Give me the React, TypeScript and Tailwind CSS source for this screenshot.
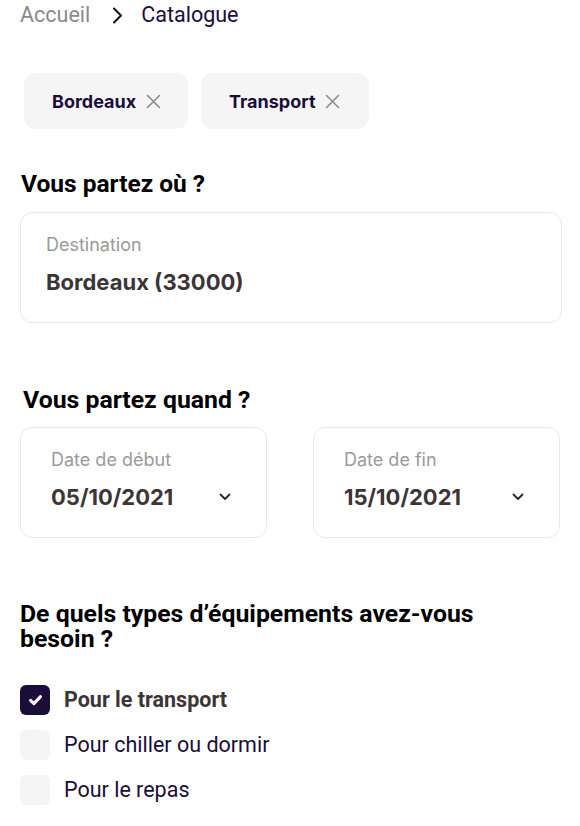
import type { FC } from "react";

const Cross: FC = () => (
  <svg width="15" height="15" viewBox="0 0 15 15" fill="none">
    <path d="M1.5 1.5l12 12M13.5 1.5l-12 12" stroke="#8c8c8c" strokeWidth="1.6" strokeLinecap="round" />
  </svg>
);

const ChevronDown: FC = () => (
  <svg width="12" height="8" viewBox="0 0 12 8" fill="none">
    <path d="M1.5 1.5L6 6l4.5-4.5" stroke="#2b2528" strokeWidth="1.8" strokeLinecap="round" strokeLinejoin="round" />
  </svg>
);

const Chip: FC<{ label: string; width: string }> = ({ label, width }) => (
  <div className={`flex h-[56px] items-center gap-[10px] rounded-[12px] bg-[#f5f5f5] pl-[28px] ${width}`}>
    <span className="font-['Inter',sans-serif] text-[18px] font-bold text-[#1b0d3a]">{label}</span>
    <Cross />
  </div>
);

const DateField: FC<{ label: string; value: string }> = ({ label, value }) => (
  <div className="h-[111px] rounded-[12px] border border-[#ebe7e9] bg-white pl-[30px] pr-[30px] pt-[20px]">
    <div className="text-[18px] leading-[24px] text-[#9a9a9a]">{label}</div>
    <div className="mt-[11px] flex items-center justify-between pr-[5px]">
      <span className="text-[22px] font-bold leading-[28px] text-[#3b3537]">{value}</span>
      <ChevronDown />
    </div>
  </div>
);

const Option: FC<{ label: string; checked?: boolean }> = ({ label, checked }) => (
  <div className="flex h-[30px] items-center gap-[14px]">
    {checked ? (
      <div className="flex h-[30px] w-[30px] items-center justify-center rounded-[6px] bg-[#1b0d3a]">
        <svg width="15" height="12" viewBox="0 0 15 12" fill="none">
          <path d="M2.5 6.3l3.4 3.3L12.5 2.6" stroke="white" strokeWidth="3" strokeLinecap="round" strokeLinejoin="round" />
        </svg>
      </div>
    ) : (
      <div className="h-[30px] w-[30px] rounded-[6px] bg-[#f5f5f5]" />
    )}
    <span
      className={`font-['Roboto',sans-serif] text-[21.5px] leading-[30px] ${
        checked ? "font-bold text-[#3b3537]" : "text-[#1b0d3a]"
      }`}
    >
      {label}
    </span>
  </div>
);

const App: FC = () => {
  return (
    <div className="h-[826px] w-[580px] overflow-hidden bg-white pl-[20px] font-['Inter',sans-serif]">
      <div className="flex h-[30px] items-center font-['Roboto',sans-serif] text-[21.5px] leading-[30px]">
        <span className="text-[#8a8a8a]">Accueil</span>
        <svg className="ml-[22px] mr-[18px]" width="11" height="17" viewBox="0 0 11 17" fill="none">
          <path d="M2 1.5l7 7-7 7" stroke="#111111" strokeWidth="2" strokeLinecap="round" strokeLinejoin="round" />
        </svg>
        <span className="text-[#1b0d3a]">Catalogue</span>
      </div>

      <div className="mt-[43px] flex gap-[13px] pl-[4px]">
        <Chip label="Bordeaux" width="w-[164px]" />
        <Chip label="Transport" width="w-[168px]" />
      </div>

      <h2 className="mt-[41px] pl-[1px] font-['Roboto',sans-serif] text-[24.5px] font-bold leading-[28px] text-black">
        Vous partez où ?
      </h2>
      <div className="mt-[14px] h-[111px] w-[542px] rounded-[12px] border border-[#ebe7e9] bg-white pl-[25px] pt-[20px]">
        <div className="text-[18px] leading-[24px] text-[#9a9a9a]">Destination</div>
        <div className="mt-[11px] text-[22px] font-bold leading-[28px] text-[#3b3537]">Bordeaux (33000)</div>
      </div>

      <h2 className="mt-[63px] pl-[3px] font-['Roboto',sans-serif] text-[24.8px] font-bold leading-[28px] text-black">
        Vous partez quand ?
      </h2>
      <div className="mt-[13px] grid w-[540px] grid-cols-2 gap-[46px]">
        <DateField label="Date de début" value="05/10/2021" />
        <DateField label="Date de fin" value="15/10/2021" />
      </div>

      <h2 className="mt-[63px] w-[500px] font-['Roboto',sans-serif] text-[24.8px] font-bold leading-[25px] text-black">
        De quels types d’équipements avez-vous besoin ?
      </h2>
      <div className="mt-[34px] flex flex-col gap-[15px]">
        <Option label="Pour le transport" checked />
        <Option label="Pour chiller ou dormir" />
        <Option label="Pour le repas" />
      </div>
    </div>
  );
};

export default App;
